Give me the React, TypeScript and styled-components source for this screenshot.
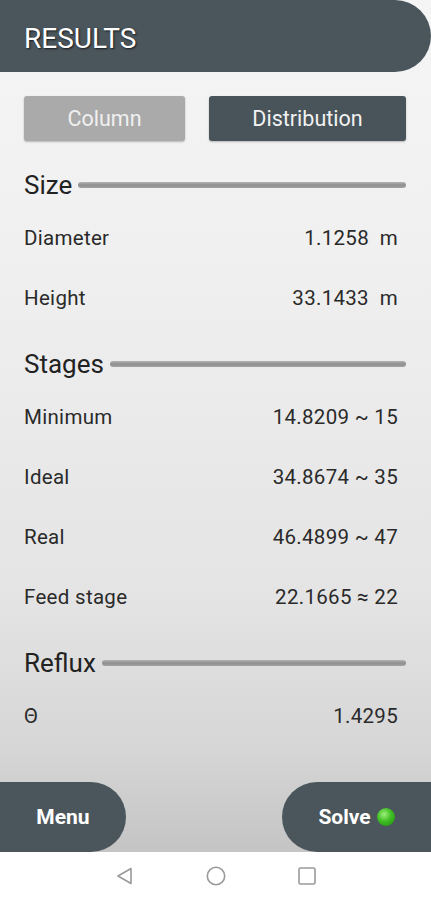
import React from 'react';
import styled, { createGlobalStyle } from 'styled-components';

const GlobalStyle = createGlobalStyle`
  html, body {
    margin: 0;
    padding: 0;
    background: #ffffff;
  }
  body {
    font-family: Roboto, "Noto Sans", "Liberation Sans", sans-serif;
  }
`;

const Screen = styled.div`
  width: 431px;
  height: 900px;
  display: flex;
  flex-direction: column;
  overflow: hidden;
`;

const Main = styled.div`
  flex: 1;
  display: flex;
  flex-direction: column;
  background: linear-gradient(180deg, #f5f5f5 0%, #f0f0f0 30%, #e4e4e4 70%, #d6d6d6 88%, #c4c4c4 100%);
`;

const Header = styled.div`
  height: 72px;
  flex-shrink: 0;
  background: #4a555c;
  border-radius: 0 36px 36px 0;
  display: flex;
  align-items: center;
  padding: 5px 0 0 24px;
  box-sizing: border-box;
`;

const Title = styled.h1`
  margin: 0;
  font-size: 28px;
  font-weight: 400;
  color: #ffffff;
  text-shadow: 1px 1px 2px rgba(0, 0, 0, 0.7);
`;

const Body = styled.div`
  padding: 24px 25px 0 24px;
`;

const Tabs = styled.div`
  display: flex;
  gap: 24px;
  padding-bottom: 8px;
`;

const Tab = styled.button<{ $active: boolean; $width: number }>`
  width: ${p => p.$width}px;
  height: 45px;
  border: none;
  border-radius: 3px;
  background: ${p => (p.$active ? '#48545a' : '#aaaaaa')};
  color: ${p => (p.$active ? '#f2f2f2' : '#f0f0f0')};
  font-family: inherit;
  font-size: 21.5px;
  box-shadow: 0 1px 2px rgba(0, 0, 0, 0.25);
  padding: 0;
`;

const SectionHead = styled.div`
  height: 46px;
  margin-top: 13px;
  display: flex;
  align-items: center;
  gap: 6px;
`;

const SectionTitle = styled.span`
  font-size: 26px;
  color: #222;
`;

const Rule = styled.div`
  flex: 1;
  height: 6px;
  border-radius: 3px;
  background: linear-gradient(180deg, #b4b4b4 0%, #8f8f8f 50%, #a2a2a2 100%);
`;

const Row = styled.div`
  height: 60px;
  display: flex;
  align-items: center;
  justify-content: space-between;
  padding-right: 8px;
  font-size: 20.5px;
  letter-spacing: 0.3px;
  color: #2a2a2a;
`;

const Value = styled.span`
  white-space: pre;
`;

const Footer = styled.div`
  margin-top: auto;
  height: 70px;
  display: flex;
  justify-content: space-between;
`;

const PillButton = styled.button<{ $side: 'left' | 'right'; $width: number }>`
  width: ${p => p.$width}px;
  height: 70px;
  border: none;
  background: #4a555c;
  color: #ffffff;
  font-family: inherit;
  font-weight: 700;
  font-size: 21px;
  border-radius: ${p => (p.$side === 'left' ? '0 35px 35px 0' : '35px 0 0 35px')};
  display: flex;
  align-items: center;
  justify-content: center;
  gap: 6px;
  padding: 0;
`;

const Led = styled.span`
  width: 18px;
  height: 18px;
  border-radius: 50%;
  background: radial-gradient(circle at 40% 35%, #9cf07a 0%, #3fbe22 45%, #1f8a10 100%);
`;

const NavBar = styled.div`
  height: 48px;
  flex-shrink: 0;
  background: #ffffff;
  display: flex;
  align-items: center;
  justify-content: center;
  gap: 71px;
`;

const NavIcon = styled.svg`
  width: 20px;
  height: 20px;
  fill: none;
  stroke: #9a9a9a;
  stroke-width: 1.6;
`;

type Item = { label: string; value: string };

const sections: { title: string; rows: Item[] }[] = [
  {
    title: 'Size',
    rows: [
      { label: 'Diameter', value: '1.1258  m' },
      { label: 'Height', value: '33.1433  m' },
    ],
  },
  {
    title: 'Stages',
    rows: [
      { label: 'Minimum', value: '14.8209 ~ 15' },
      { label: 'Ideal', value: '34.8674 ~ 35' },
      { label: 'Real', value: '46.4899 ~ 47' },
      { label: 'Feed stage', value: '22.1665 ≈ 22' },
    ],
  },
  {
    title: 'Reflux',
    rows: [{ label: 'Θ', value: '1.4295' }],
  },
];

export default function App() {
  return (
    <Screen>
      <GlobalStyle />
      <Main>
        <Header>
          <Title>RESULTS</Title>
        </Header>
        <Body>
          <Tabs>
            <Tab $active={false} $width={161}>Column</Tab>
            <Tab $active $width={197}>Distribution</Tab>
          </Tabs>
          {sections.map(s => (
            <div key={s.title}>
              <SectionHead>
                <SectionTitle>{s.title}</SectionTitle>
                <Rule />
              </SectionHead>
              {s.rows.map(r => (
                <Row key={r.label}>
                  <span>{r.label}</span>
                  <Value>{r.value}</Value>
                </Row>
              ))}
            </div>
          ))}
        </Body>
        <Footer>
          <PillButton $side="left" $width={126}>Menu</PillButton>
          <PillButton $side="right" $width={149}>
            Solve <Led />
          </PillButton>
        </Footer>
      </Main>
      <NavBar>
        <NavIcon viewBox="0 0 20 20">
          <path d="M16 2.5 L3 10 L16 17.5 Z" strokeLinejoin="round" />
        </NavIcon>
        <NavIcon viewBox="0 0 20 20">
          <circle cx="10" cy="10" r="8.7" />
        </NavIcon>
        <NavIcon viewBox="0 0 20 20">
          <rect x="2" y="2" width="16" height="16" rx="1.5" />
        </NavIcon>
      </NavBar>
    </Screen>
  );
}
